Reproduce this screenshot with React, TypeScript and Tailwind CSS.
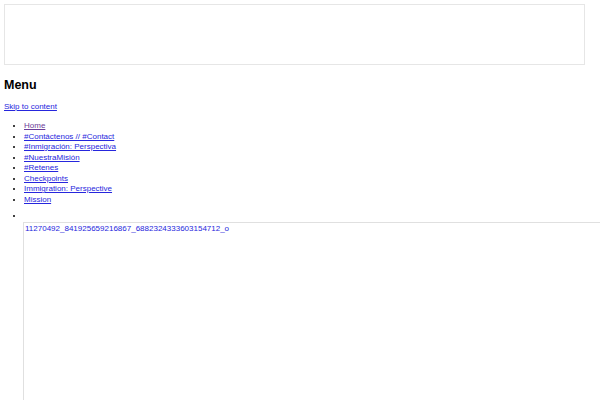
export default function App() {
    const links = [
        "#Contáctenos // #Contact",
        "#Inmigración: Perspectiva",
        "#NuestraMisión",
        "#Retenes",
        "Checkpoints",
        "Immigration: Perspective",
        "Mission",
    ];
    return (
        <div className="h-[400px] bg-white font-['Liberation_Sans',Arial,sans-serif] text-[8px] text-black px-[4px] pt-[4px] overflow-hidden">
            <div className="h-[61px] w-[581px] border border-[#e6e6e6]"></div>
            <h2 className="mt-[12px] text-[12.5px] leading-[16px] font-bold">Menu</h2>
            <a className="block mt-[9px] leading-[10px] text-[#2626dd] underline" href="#">Skip to content</a>
            <ul className="mt-[9px] list-disc pl-[20px] leading-[10.5px]">
                <li>
                    <a className="text-[#6b3d98] underline" href="#">Home</a>
                </li>
                {links.map((l) => (
                    <li key={l}>
                        <a className="text-[#2626dd] underline" href="#">{l}</a>
                    </li>
                ))}
            </ul>
            <ul className="mt-[6px] list-disc pl-[20px] leading-[10.5px]">
                <li>
                    <div>&nbsp;</div>
                    <div className="-ml-[1px] h-[200px] w-[600px] border-l border-t border-[#e0e0e0] pl-[1px] pt-[1px]">
                        <span className="text-[#2626dd]">11270492_841925659216867_6882324333603154712_o</span>
                    </div>
                </li>
            </ul>
        </div>
    );
}
